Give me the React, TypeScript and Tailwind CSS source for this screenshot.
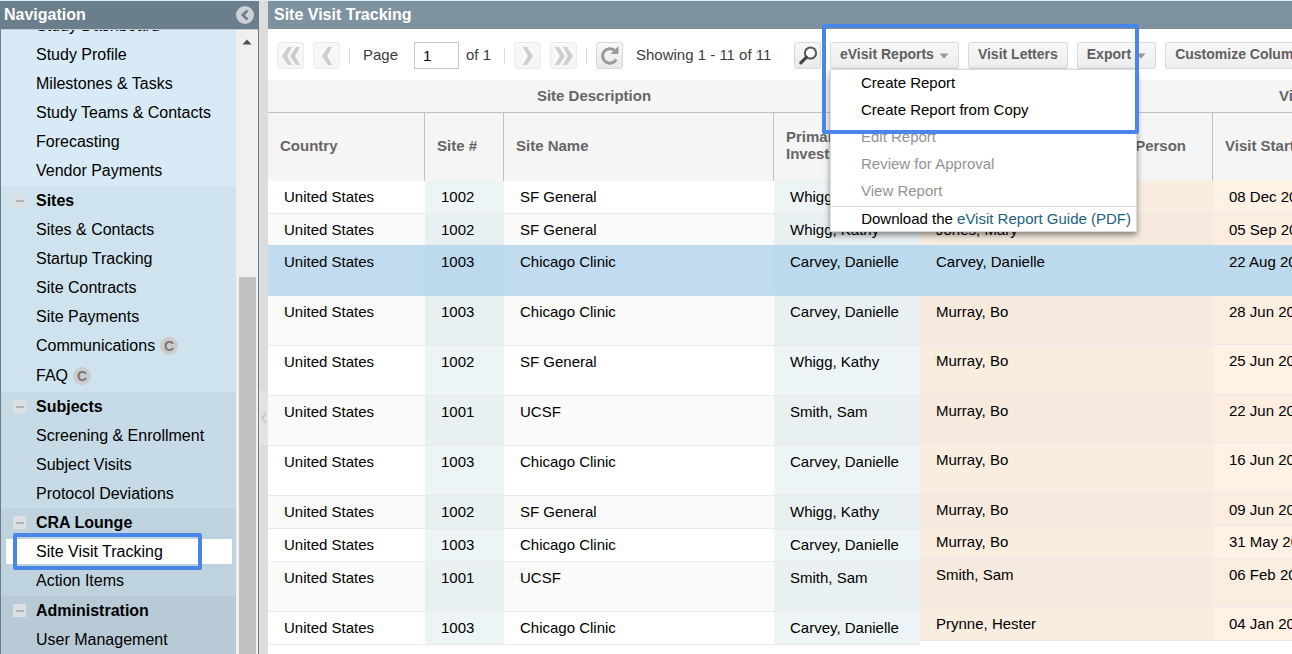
import type { ReactNode } from "react";

type NavItem = { label: string; badge?: boolean; active?: boolean };
type NavSection = { title?: string; tone: string; items: NavItem[] };

const sections: NavSection[] = [
  {
    tone: "bg-[#d7eaf5] -mt-[19px] pb-px",
    items: [
      { label: "Study Dashboard" },
      { label: "Study Profile" },
      { label: "Milestones & Tasks" },
      { label: "Study Teams & Contacts" },
      { label: "Forecasting" },
      { label: "Vendor Payments" },
    ],
  },
  {
    title: "Sites",
    tone: "bg-[#cfe3ee] pb-px",
    items: [
      { label: "Sites & Contacts" },
      { label: "Startup Tracking" },
      { label: "Site Contracts" },
      { label: "Site Payments" },
      { label: "Communications", badge: true },
      { label: "FAQ", badge: true },
    ],
  },
  {
    title: "Subjects",
    tone: "bg-[#c7dbe6]",
    items: [
      { label: "Screening & Enrollment" },
      { label: "Subject Visits" },
      { label: "Protocol Deviations" },
    ],
  },
  {
    title: "CRA Lounge",
    tone: "bg-[#bfd3de] pb-px",
    items: [{ label: "Site Visit Tracking", active: true }, { label: "Action Items" }],
  },
  {
    title: "Administration",
    tone: "bg-[#b7cad6] grow",
    items: [{ label: "User Management" }],
  },
];

type Visit = {
  site: string;
  name: string;
  investigator: string;
  person: string;
  date: string;
  siteHeight: string;
  visitHeight: string;
};

const visits: Visit[] = [
  { site: "1002", name: "SF General", investigator: "Whigg, Kathy", person: "", date: "08 Dec 2018", siteHeight: "h-[33px]", visitHeight: "h-[33px]" },
  { site: "1002", name: "SF General", investigator: "Whigg, Kathy", person: "Jones, Mary", date: "05 Sep 2018", siteHeight: "h-[32px]", visitHeight: "h-[32px]" },
  { site: "1003", name: "Chicago Clinic", investigator: "Carvey, Danielle", person: "Carvey, Danielle", date: "22 Aug 2018", siteHeight: "h-[50px]", visitHeight: "h-[50px]" },
  { site: "1003", name: "Chicago Clinic", investigator: "Carvey, Danielle", person: "Murray, Bo", date: "28 Jun 2018", siteHeight: "h-[50px]", visitHeight: "h-[49px]" },
  { site: "1002", name: "SF General", investigator: "Whigg, Kathy", person: "Murray, Bo", date: "25 Jun 2018", siteHeight: "h-[50px]", visitHeight: "h-[50px]" },
  { site: "1001", name: "UCSF", investigator: "Smith, Sam", person: "Murray, Bo", date: "22 Jun 2018", siteHeight: "h-[50px]", visitHeight: "h-[49px]" },
  { site: "1003", name: "Chicago Clinic", investigator: "Carvey, Danielle", person: "Murray, Bo", date: "16 Jun 2018", siteHeight: "h-[50px]", visitHeight: "h-[50px]" },
  { site: "1002", name: "SF General", investigator: "Whigg, Kathy", person: "Murray, Bo", date: "09 Jun 2018", siteHeight: "h-[33px]", visitHeight: "h-[32px]" },
  { site: "1003", name: "Chicago Clinic", investigator: "Carvey, Danielle", person: "Murray, Bo", date: "31 May 2018", siteHeight: "h-[33px]", visitHeight: "h-[33px]" },
  { site: "1001", name: "UCSF", investigator: "Smith, Sam", person: "Smith, Sam", date: "06 Feb 2018", siteHeight: "h-[50px]", visitHeight: "h-[49px]" },
  { site: "1003", name: "Chicago Clinic", investigator: "Carvey, Danielle", person: "Prynne, Hester", date: "04 Jan 2018", siteHeight: "h-[33px]", visitHeight: "h-[33px]" },
];

const SELECTED = 2;

function tone(index: number, even: string, odd: string, selected: string) {
  if (index === SELECTED) return selected;
  return index % 2 ? odd : even;
}

function Cell({ index, shade, children }: { index: number; shade: string; children: ReactNode }) {
  const line =
    index === SELECTED || index === SELECTED - 1 ? "border-[#bfdbf0]" : "border-[#ebebeb]";
  return (
    <td className={`overflow-hidden whitespace-nowrap border-b px-4 py-0 align-top leading-[31px] ${line} ${shade}`}>
      {children}
    </td>
  );
}

function GroupHead({ span, children }: { span: number; children: ReactNode }) {
  return (
    <tr className="h-[33px]">
      <th colSpan={span} scope="colgroup" className="border-b border-[#c0c0c0] p-0 font-bold">
        {children}
      </th>
    </tr>
  );
}

function Head({ className = "", children }: { className?: string; children: ReactNode }) {
  return (
    <th scope="col" className={`border-r border-[#c0c0c0] px-3 pb-1 pt-0 text-left font-bold leading-[17px] ${className}`}>
      {children}
    </th>
  );
}

function IconButton({ label, disabled, children }: { label: string; disabled?: boolean; children: ReactNode }) {
  return (
    <button
      type="button"
      aria-label={label}
      disabled={disabled}
      className={`flex size-[27px] shrink-0 items-center justify-center rounded-[3px] border bg-linear-to-b from-[#f8f8f8] ${
        disabled ? "border-[#ececec] to-[#f5f5f5]" : "border-[#d8d8d8] to-[#e9e9e9]"
      }`}
    >
      {children}
    </button>
  );
}

function TextButton({ caret, children }: { caret?: boolean; children: ReactNode }) {
  return (
    <button
      type="button"
      className="flex h-[27px] shrink-0 items-center gap-[5px] whitespace-nowrap rounded-[3px] border border-[#dadada] bg-linear-to-b from-[#f7f7f7] to-[#ededed] px-[9px] pb-0.5 text-[14px] font-bold text-[#606060]"
    >
      {children}
      {caret && (
        <svg width="10" height="6" viewBox="0 0 10 6" className="mt-0.5" aria-hidden="true">
          <path d="M0.5 0.5h9L5 5.8z" fill="#9b9b9b" />
        </svg>
      )}
    </button>
  );
}

function Chevrons({ double, right }: { double?: boolean; right?: boolean }) {
  return (
    <svg width="20" height="20" viewBox="0 0 20 20" className={right ? "-scale-x-100" : ""} aria-hidden="true">
      {double ? (
        <path d="M7 1h4L6 10l5 9H7L1 10zM15 1h4l-5 9 5 9h-4L9 10z" fill="#cdcdcd" />
      ) : (
        <path d="M11 1h4l-5 9 5 9h-4L5 10z" fill="#cdcdcd" />
      )}
    </svg>
  );
}

function Separator({ className }: { className: string }) {
  return <span className={`h-4 w-px shrink-0 bg-[#dcdcdc] ${className}`} />;
}

function Sidebar() {
  return (
    <aside className="flex w-[259px] shrink-0 flex-col border-x border-[#6b7e8b]">
      <header className="flex h-[28px] shrink-0 items-center justify-between bg-[#6b7e8b] pl-[3px] pr-1">
        <h2 className="text-[16px] font-bold text-white">Navigation</h2>
        <button type="button" aria-label="Collapse navigation">
          <svg width="18" height="18" viewBox="0 0 18 18" aria-hidden="true">
            <circle cx="9" cy="9" r="9" fill="#ccd1d5" />
            <path d="M11.5 4.5L6.8 9l4.7 4.5" fill="none" stroke="#6b7e8b" strokeWidth="2.6" />
          </svg>
        </button>
      </header>
      <div className="flex min-h-0 grow border-t border-[#c3cdd4]">
        <nav className="flex min-w-0 grow flex-col overflow-hidden text-[16px] text-black">
          {sections.map((section, i) => (
            <section key={i} className={`flex shrink-0 flex-col ${section.tone}`}>
              {section.title && (
                <h3 className="flex h-[29px] items-center font-bold">
                  <button type="button" aria-label={`Collapse ${section.title}`} className="ml-3 mr-[10px] flex size-[13px] items-center justify-center bg-[#dde0e2]">
                    <span className="h-[2px] w-2 bg-[#b0b4b6]" />
                  </button>
                  {section.title}
                </h3>
              )}
              {section.items.map((item) => (
                <div key={item.label} className={`relative flex items-center ${item.badge ? "h-[30px]" : "h-[29px]"}`}>
                  <a
                    href="#"
                    className={`ml-[5px] mr-1 flex h-[25px] grow items-center gap-[5px] whitespace-nowrap pl-[30px] ${item.active ? "bg-white" : ""}`}
                  >
                    {item.label}
                    {item.badge && (
                      <span className="flex size-[18px] items-center justify-center rounded-full bg-[#cbcbcb] text-[14px] font-bold text-[#777]">
                        C
                      </span>
                    )}
                  </a>
                  {item.active && (
                    <span className="pointer-events-none absolute -top-1 left-3 h-[37px] w-[189px] rounded-[2px] border-4 border-[#4a86e8]" />
                  )}
                </div>
              ))}
            </section>
          ))}
        </nav>
        <div className="flex w-[22px] shrink-0 flex-col items-center bg-[#f0f0f0]" aria-hidden="true">
          <svg width="10" height="6" viewBox="0 0 10 6" className="mt-[9px] shrink-0">
            <path d="M5 0.5L9.6 5.5H0.4z" fill="#505050" />
          </svg>
          <span className="mt-auto h-[60.4%] w-[17px] bg-[#c1c1c1]" />
        </div>
      </div>
    </aside>
  );
}

function ReportsMenu() {
  return (
    <div className="relative ml-[9px] shrink-0">
      <TextButton caret>eVisit Reports</TextButton>
      <div role="menu" className="absolute left-0 top-full z-20 w-[307px] border border-[#dcdcdc] bg-white text-[15px] shadow-[0_3px_6px_rgba(0,0,0,0.45)]">
        {["Create Report", "Create Report from Copy", "Edit Report", "Review for Approval", "View Report"].map(
          (label, i) => (
            <button
              key={label}
              type="button"
              role="menuitem"
              disabled={i > 1}
              className={`block h-[27px] w-full pl-[30px] text-left ${i > 1 ? "text-[#939393]" : "text-black"}`}
            >
              {label}
            </button>
          ),
        )}
        <p className="mt-px whitespace-nowrap border-t border-[#dedede] pr-[5px] text-right leading-6 text-black">
          Download the{" "}
          <a href="#" className="text-[#22617e]">
            eVisit Report Guide (PDF)
          </a>
        </p>
      </div>
      <span className="pointer-events-none absolute -left-2 -top-[18px] z-30 h-[110px] w-[317px] rounded-[2px] border-4 border-[#4a86e8]" />
    </div>
  );
}

function Toolbar() {
  return (
    <div className="flex h-[51px] shrink-0 items-center pl-[9px] pt-0.5 text-[15px] text-[#3c3c3c]">
      <IconButton label="First page" disabled>
        <Chevrons double />
      </IconButton>
      <span className="w-[9px] shrink-0" />
      <IconButton label="Previous page" disabled>
        <Chevrons />
      </IconButton>
      <Separator className="ml-[9px] mr-[13px]" />
      <label htmlFor="page" className="w-[51px] shrink-0">
        Page
      </label>
      <input
        id="page"
        defaultValue="1"
        className="h-[27px] w-[45px] shrink-0 border border-[#c8c8c8] bg-white pl-2 text-[15px] text-black"
      />
      <span className="ml-[7px] w-[38px] shrink-0 whitespace-nowrap">of 1</span>
      <Separator className="mr-[9px]" />
      <IconButton label="Next page" disabled>
        <Chevrons right />
      </IconButton>
      <span className="w-[9px] shrink-0" />
      <IconButton label="Last page" disabled>
        <Chevrons double right />
      </IconButton>
      <Separator className="mx-[9px]" />
      <IconButton label="Refresh">
        <svg width="21" height="21" viewBox="0 0 21 21" aria-hidden="true">
          <path d="M17.2 14.6A7.3 7.3 0 1 1 15.4 5.2" fill="none" stroke="#9a9a9a" strokeWidth="3" />
          <path d="M19.5 1v8H11.5z" fill="#9a9a9a" />
        </svg>
      </IconButton>
      <span className="ml-[13px] w-[158px] shrink-0 whitespace-nowrap">Showing 1 - 11 of 11</span>
      <IconButton label="Search">
        <svg width="20" height="20" viewBox="0 0 20 20" aria-hidden="true">
          <circle cx="12.5" cy="7" r="5.6" fill="#fafafa" stroke="#555" strokeWidth="2" />
          <path d="M8.3 11.3L2.8 16.8" stroke="#444" strokeWidth="3.2" strokeLinecap="round" />
        </svg>
      </IconButton>
      <ReportsMenu />
      <div className="ml-[9px] flex gap-[9px]">
        <TextButton>Visit Letters</TextButton>
        <TextButton caret>Export</TextButton>
        <TextButton>Customize Columns</TextButton>
      </div>
    </div>
  );
}

function SiteTable() {
  return (
    <table className="w-[652px] shrink-0 table-fixed border-separate border-spacing-0">
      <colgroup>
        <col className="w-[157px]" />
        <col className="w-[79px]" />
        <col className="w-[270px]" />
        <col className="w-[146px]" />
      </colgroup>
      <thead className="bg-[#f5f5f5] text-[#666]">
        <GroupHead span={4}>Site Description</GroupHead>
        <tr className="h-[68px]">
          <Head>Country</Head>
          <Head>Site #</Head>
          <Head>Site Name</Head>
          <Head>
            Primary
            <br />
            Investigator
          </Head>
        </tr>
      </thead>
      <tbody className="text-black">
        {visits.map((v, i) => {
          const plain = tone(i, "bg-white", "bg-[#fafafa]", "bg-[#c1dbf0]");
          const tint = tone(i, "bg-[#ecf4f5]", "bg-[#e8f0f2]", "bg-[#bcd9ed]");
          return (
            <tr key={i} className={v.siteHeight}>
              <Cell index={i} shade={plain}>United States</Cell>
              <Cell index={i} shade={tint}>{v.site}</Cell>
              <Cell index={i} shade={plain}>{v.name}</Cell>
              <Cell index={i} shade={tint}>{v.investigator}</Cell>
            </tr>
          );
        })}
      </tbody>
    </table>
  );
}

function VisitTable() {
  return (
    <table className="w-[836px] table-fixed border-separate border-spacing-0">
      <colgroup>
        <col className="w-[293px]" />
        <col />
      </colgroup>
      <thead className="bg-[#f5f5f5] text-[#666]">
        <GroupHead span={2}>Visit Information</GroupHead>
        <tr className="h-[68px]">
          <Head className="text-right">
            <span className="pr-3.5">Person</span>
          </Head>
          <Head>Visit Start Date</Head>
        </tr>
      </thead>
      <tbody className="text-black">
        {visits.map((v, i) => (
          <tr key={i} className={v.visitHeight}>
            <Cell index={i} shade={tone(i, "bg-[#f9ede0]", "bg-[#f5eadd]", "bg-[#bcd9ed]")}>{v.person}</Cell>
            <Cell index={i} shade={tone(i, "bg-[#fff1e3]", "bg-[#fbeee0]", "bg-[#bcd9ed]")}>{v.date}</Cell>
          </tr>
        ))}
      </tbody>
    </table>
  );
}

export default function App() {
  return (
    <div className="flex h-screen overflow-hidden border-t border-[#dcf0fa] bg-white font-['Liberation_Sans',Arial,sans-serif]">
      <Sidebar />
      <div className="flex w-[9px] shrink-0 flex-col justify-center bg-[#dcdcdc]">
        <button
          type="button"
          aria-label="Toggle navigation panel"
          className="mt-[180px] flex h-[54px] w-full items-center justify-center border border-[#e6e6e6] bg-[#e2e2e2]"
        >
          <svg width="6" height="12" viewBox="0 0 6 12" aria-hidden="true">
            <path d="M5 1L1.2 6 5 11" fill="none" stroke="#c4c4c4" strokeWidth="1.5" />
          </svg>
        </button>
      </div>
      <main className="flex min-w-0 grow flex-col overflow-hidden">
        <header className="flex h-[28px] shrink-0 items-center bg-[#7f929f] pl-1.5">
          <h1 className="text-[16px] font-bold text-white">Site Visit Tracking</h1>
        </header>
        <Toolbar />
        <div className="flex min-h-0 grow items-start overflow-hidden text-[15px]">
          <SiteTable />
          <div className="min-w-0 grow overflow-hidden">
            <VisitTable />
          </div>
        </div>
      </main>
    </div>
  );
}
